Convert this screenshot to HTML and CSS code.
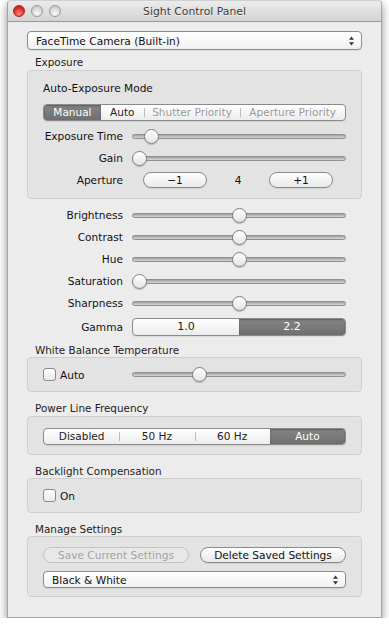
FILE: index.html
```html
<!DOCTYPE html>
<html lang="en">
<head>
  <meta charset="UTF-8">
  <title>Sight Control Panel</title>
  <link rel="stylesheet" href="styles.css">
</head>
<body>

  <div class="window">
    <div class="titlebar">
      <div class="lights">
        <span class="light red"></span>
        <span class="light"></span>
        <span class="light"></span>
      </div>
      <div class="title">Sight Control Panel</div>
    </div>

    <div class="content">
      <div class="popup camera">
        <span>FaceTime Camera (Built-in)</span>
        <svg class="arrows" width="7" height="10" viewBox="0 0 7 10"><path d="M3.5 0.5 L6 3.8 L1 3.8 Z M3.5 9.5 L6 6.2 L1 6.2 Z" fill="#333"/></svg>
      </div>

      <div class="group-label first">Exposure</div>
      <div class="group exposure">
        <div class="mode-label">Auto-Exposure Mode</div>
        <div class="segmented mode">
          <span class="seg selected">Manual</span>
          <span class="seg">Auto</span>
          <span class="seg disabled">Shutter Priority</span>
          <span class="seg disabled">Aperture Priority</span>
        </div>
        <div class="row">
          <label>Exposure Time</label>
          <div class="slider"><div class="track"></div><div class="thumb" style="--v: 0.06"></div></div>
        </div>
        <div class="row">
          <label>Gain</label>
          <div class="slider"><div class="track"></div><div class="thumb" style="--v: 0"></div></div>
        </div>
        <div class="row">
          <label>Aperture</label>
          <div class="stepper">
            <span class="button">−1</span>
            <span class="value">4</span>
            <span class="button">+1</span>
          </div>
        </div>
      </div>

      <div class="rows">
        <div class="row">
          <label>Brightness</label>
          <div class="slider"><div class="track"></div><div class="thumb" style="--v: 0.5"></div></div>
        </div>
        <div class="row">
          <label>Contrast</label>
          <div class="slider"><div class="track"></div><div class="thumb" style="--v: 0.5"></div></div>
        </div>
        <div class="row">
          <label>Hue</label>
          <div class="slider"><div class="track"></div><div class="thumb" style="--v: 0.5"></div></div>
        </div>
        <div class="row">
          <label>Saturation</label>
          <div class="slider"><div class="track"></div><div class="thumb" style="--v: 0"></div></div>
        </div>
        <div class="row">
          <label>Sharpness</label>
          <div class="slider"><div class="track"></div><div class="thumb" style="--v: 0.5"></div></div>
        </div>
        <div class="row gamma">
          <label>Gamma</label>
          <div class="segmented">
            <span class="seg">1.0</span>
            <span class="seg selected">2.2</span>
          </div>
        </div>
      </div>

      <div class="group-label after-rows">White Balance Temperature</div>
      <div class="group check-box">
        <div class="row">
          <label class="check"><span class="box"></span>Auto</label>
          <div class="slider"><div class="track"></div><div class="thumb" style="--v: 0.3"></div></div>
        </div>
      </div>

      <div class="group-label">Power Line Frequency</div>
      <div class="group power">
        <div class="segmented">
          <span class="seg">Disabled</span>
          <span class="seg">50 Hz</span>
          <span class="seg">60 Hz</span>
          <span class="seg selected">Auto</span>
        </div>
      </div>

      <div class="group-label">Backlight Compensation</div>
      <div class="group check-box">
        <div class="row">
          <label class="check"><span class="box"></span>On</label>
        </div>
      </div>

      <div class="group-label">Manage Settings</div>
      <div class="group manage">
        <div class="buttons">
          <span class="button disabled">Save Current Settings</span>
          <span class="button">Delete Saved Settings</span>
        </div>
        <div class="popup preset">
          <span>Black &amp; White</span>
          <svg class="arrows" width="7" height="10" viewBox="0 0 7 10"><path d="M3.5 0.5 L6 3.8 L1 3.8 Z M3.5 9.5 L6 6.2 L1 6.2 Z" fill="#333"/></svg>
        </div>
      </div>
    </div>
  </div>

</body>
</html>
```

FILE: styles.css
```css
body {
  margin: 0;
  background: #fff;
  font-family: "Lucida Grande", "DejaVu Sans", sans-serif;
  font-size: 10.6px;
  color: #111;
}

.window {
  margin-left: 7px;
  width: 373px;
  height: 616px;
  border: 1px solid #a4a4a4;
  border-top-color: #d0d0d0;
  border-radius: 4px 4px 0 0;
  background: #ececec;
  box-shadow: 0 4px 10px rgba(0,0,0,0.45);
}

.titlebar {
  position: relative;
  height: 20px;
  border-bottom: 1px solid #999;
  border-radius: 4px 4px 0 0;
  background: linear-gradient(#ececec, #d3d3d3);
  display: flex;
  align-items: center;
}

.lights {
  display: flex;
  gap: 6px;
  padding-left: 5px;
}

.light {
  width: 12px;
  height: 12px;
  border-radius: 50%;
  border: 0.5px solid #999;
  box-sizing: border-box;
  background: radial-gradient(circle at 50% 75%, #fbfbfb, #cfcfcf 70%);
}

.light.red {
  border-color: #a12a23;
  background: radial-gradient(circle at 50% 75%, #ff8a80, #e0261c 60%, #b51d14);
}

.title {
  position: absolute;
  left: 0;
  right: 0;
  text-align: center;
  font-size: 10.8px;
  color: #3c3c3c;
  text-shadow: 0 1px 0 rgba(255,255,255,0.6);
}

.content {
  padding: 9px 19px 0;
}

/* popups */
.popup {
  height: 15px;
  border: 1px solid #8c8c8c;
  border-radius: 4px;
  background: linear-gradient(#ffffff, #f1f1f1);
  box-shadow: 0 1px 1px rgba(0,0,0,0.08);
  display: flex;
  align-items: center;
  justify-content: space-between;
  padding: 0 6px 0 8px;
}

.popup.camera {
  height: 17px;
}

.popup .arrows {
  display: block;
}

/* group boxes */
.group-label {
  margin-top: 9px;
  padding-left: 8px;
  line-height: 14px;
  font-size: 10.4px;
  color: #222;
}

.group-label.first {
  margin-top: 5px;
  margin-bottom: 1px;
}

.group-label.after-rows {
  margin-top: 5px;
}

.group-label + .power {
  margin-top: 1px;
}

.group {
  border: 1px solid #cfcfcf;
  border-radius: 4px;
  background: #e3e3e3;
}

.exposure {
  padding: 10px 15px 7px;
}

.mode-label {
  line-height: 14px;
}

.row {
  display: flex;
  align-items: center;
  height: 22px;
}

.row label {
  width: 80px;
  margin-right: 9px;
  text-align: right;
  white-space: nowrap;
}

.rows {
  margin-top: 5px;
  padding: 0 16px;
}

.row.gamma {
  margin-top: 2px;
}

/* segmented controls */
.segmented {
  display: flex;
  height: 15px;
  border: 1px solid #8a8a8a;
  border-radius: 4px;
  overflow: hidden;
  background: linear-gradient(#ffffff, #ececec);
  box-shadow: 0 1px 1px rgba(0,0,0,0.08);
}

.segmented .seg {
  flex: 1;
  position: relative;
  text-align: center;
  line-height: 15px;
  font-size: 10.5px;
  color: #1c1c1c;
}

.segmented .seg + .seg::before {
  content: "";
  position: absolute;
  left: 0;
  top: 3px;
  bottom: 3px;
  border-left: 1px solid #bdbdbd;
}

.segmented .seg.selected::before,
.segmented .seg.selected + .seg::before {
  display: none;
}

.segmented .seg.selected {
  background: linear-gradient(#858585, #6f6f6f);
  color: #fff;
  box-shadow: inset 0 1px 2px rgba(0,0,0,0.3);
}

.segmented .seg.disabled {
  color: #9a9a9a;
}

.mode {
  margin: 9px 0 4px;
}

.mode .seg:nth-child(1) { flex: 57; }
.mode .seg:nth-child(2) { flex: 43; }
.mode .seg:nth-child(3) { flex: 97; }
.mode .seg:nth-child(4) { flex: 105; }

.gamma .segmented {
  flex: 1;
  height: 16px;
}

.gamma .segmented .seg {
  line-height: 16px;
  font-size: 11px;
}

.power {
  padding: 11px 15px 9px;
}

/* sliders */
.slider {
  position: relative;
  flex: 1;
  height: 15px;
}

.slider .track {
  position: absolute;
  left: 0;
  right: 0;
  top: 5px;
  height: 3px;
  border: 1px solid #8f8f8f;
  border-radius: 3px;
  background: linear-gradient(#a0a0a0, #d8d8d8);
}

.slider .thumb {
  position: absolute;
  top: 0;
  left: calc(7px + (100% - 14px) * var(--v));
  width: 15px;
  height: 15px;
  margin-left: -7px;
  box-sizing: border-box;
  border: 1px solid #808080;
  border-radius: 50%;
  background: linear-gradient(#ffffff, #e4e4e4);
  box-shadow: 0 1px 1px rgba(0,0,0,0.2);
}

/* buttons */
.stepper {
  flex: 1;
  display: flex;
  align-items: center;
  padding: 0 13px 0 11px;
}

.button {
  display: block;
  height: 16px;
  box-sizing: border-box;
  border: 1px solid #8a8a8a;
  border-radius: 8px;
  background: linear-gradient(#ffffff, #e9e9e9);
  box-shadow: 0 1px 1px rgba(0,0,0,0.08);
  text-align: center;
  line-height: 14px;
}

.stepper .button {
  width: 64px;
}

.stepper .value {
  flex: 1;
  text-align: center;
}

.button.disabled {
  color: #a3a3a3;
  border-color: #c2c2c2;
  background: #e8e8e8;
  box-shadow: none;
}

/* checkbox groups */
.check-box {
  padding: 0 15px;
}

.check-box .row {
  height: 33px;
}

.check-box .row label.check {
  display: flex;
  align-items: center;
  text-align: left;
}

.check .box {
  width: 13px;
  height: 13px;
  box-sizing: border-box;
  margin-right: 4px;
  border: 1px solid #8a8a8a;
  border-radius: 3px;
  background: linear-gradient(#ffffff, #e9e9e9);
}

/* manage settings */
.manage {
  padding: 10px 15px 8px;
}

.buttons {
  display: flex;
  gap: 11px;
}

.buttons .button {
  flex: 1;
}

.popup.preset {
  margin-top: 8px;
}
```
